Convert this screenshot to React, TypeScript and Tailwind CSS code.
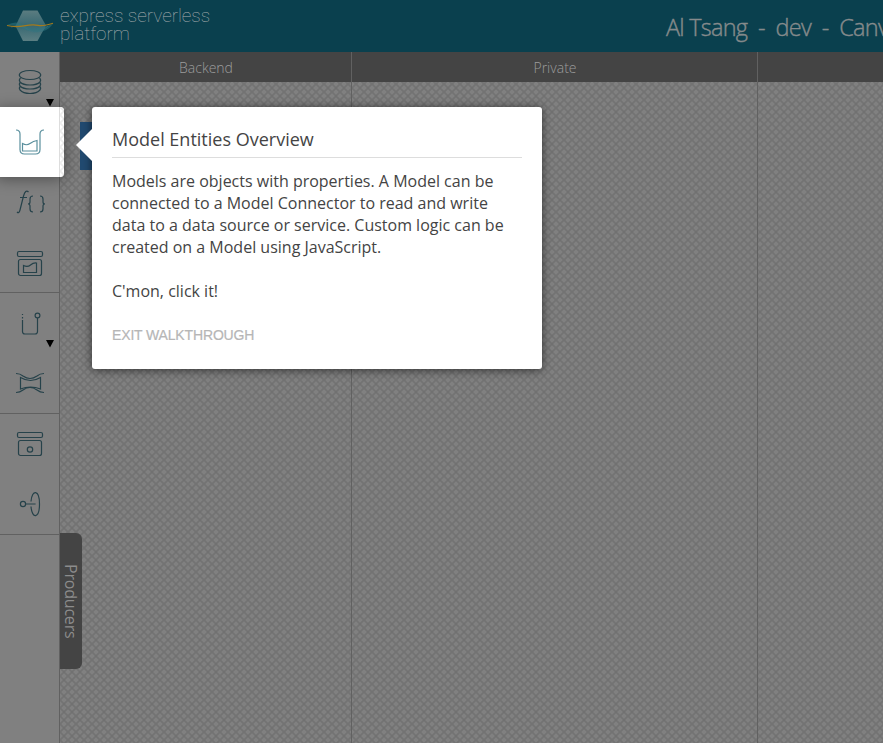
import React from "react";

const stroke = { fill: "none", stroke: "currentColor", strokeWidth: 1.2 };

function Tool({ children, className = "h-[60px]", arrow = false }: { children: React.ReactNode; className?: string; arrow?: boolean }) {
  return (
    <div className={`relative w-full shrink-0 text-[#26424a] ${className}`}>
      {children}
      {arrow && (
        <svg className="absolute bottom-0 left-[46px] h-2 w-2 text-black" viewBox="0 0 8 8">
          <path d="M0 0h8L4 7.5z" fill="currentColor" />
        </svg>
      )}
    </div>
  );
}

function Icon({ children, className = "" }: { children: React.ReactNode; className?: string }) {
  return (
    <svg className={`ml-[15px] block h-[30px] w-[30px] ${className}`} viewBox="0 0 30 30" {...stroke}>
      {children}
    </svg>
  );
}

function Pattern({ id, base, line, dot }: { id: string; base: string; line: string; dot: string }) {
  return (
    <svg className="absolute inset-0 h-full w-full">
      <defs>
        <pattern id={id} width="8" height="8" patternUnits="userSpaceOnUse">
          <rect width="8" height="8" fill={base} />
          <path d="M-1 -1L9 9M9 -1L-1 9" stroke={line} strokeWidth="1.800" />
          <rect x="3" y="3" width="2" height="2" fill={dot} />
        </pattern>
      </defs>
      <rect width="100%" height="100%" fill={`url(#${id})`} />
    </svg>
  );
}

function Logo() {
  return (
    <svg className="ml-1.5 mt-2 h-9 w-12 shrink-0" viewBox="0 0 48 36">
      <defs>
        <linearGradient id="hex" x1="0" y1="0" x2="0" y2="1">
          <stop offset="0" stopColor="#5b7c80" />
          <stop offset=".5" stopColor="#386973" />
          <stop offset="1" stopColor="#5b7e82" />
        </linearGradient>
      </defs>
      <path d="M17 2.500h14.500l8.500 15-8.500 15.500H17L9.500 18z" fill="url(#hex)" />
      <path d="M1 17q9-5 17 0t13 3q9-1 16-4-7 9-17 8-9-1-15-4T1 17" fill="#2d7480" opacity=".55" />
      <path d="M5 19q10-3 18 3t19-4" fill="none" stroke="#3d7580" opacity=".6" />
      <path d="M1 17.500q8 2 17 .3t14-.5 15-2" fill="none" stroke="#a47a1c" strokeWidth="1.200" />
    </svg>
  );
}

function Columns() {
  const cols = [
    { name: "Backend", width: "w-[292px]" },
    { name: "Private", width: "w-[406px]" },
    { name: "", width: "w-[126px]" },
  ];
  return (
    <main className="relative flex min-w-0 flex-1">
      <Pattern id="mesh" base="#808080" line="#737373" dot="#717171" />
      {cols.map((c, i) => (
        <section key={i} className={`relative shrink-0 ${c.width} ${i < 2 ? "border-r border-[#616161]" : ""}`}>
          <h2 className="h-[30px] bg-[#444] pl-px pt-px text-center text-[14px] font-light leading-[30px] text-[#9c9c9c]">{c.name}</h2>
        </section>
      ))}
      <div className="absolute left-5 top-[70px] h-12 w-12 bg-[#214a70]" />
      <div className="absolute left-0 top-[481px] flex h-[136px] w-[22px] items-center justify-center rounded-r-md bg-[#444] text-[16px] tracking-[-0.2px] text-[#8c8c8c] [writing-mode:vertical-rl]">
        Producers
      </div>
    </main>
  );
}

function Beaker() {
  return (
    <svg className="absolute left-[15px] top-5 h-[30px] w-[30px] text-[#5a8f9d]" viewBox="0 0 30 30" {...stroke}>
      <path d="M1 3q4 0 4 4v15.500q0 4.500 4.500 4.500h11q4.500 0 4.500-4.500V7q0-4 4-4" />
      <path d="M7.500 16.500q4 2.500 7.500 0t7-3V24h-14.500z" />
    </svg>
  );
}

export default function App() {
  return (
    <div className="relative flex h-[743px] w-[883px] flex-col overflow-hidden bg-[#808080] font-['Open_Sans',sans-serif]">
      <header className="flex h-[52px] shrink-0 bg-[#0a404e] text-[#858a8b]">
        <Logo />
        <div className="ml-1.5 w-[200px] shrink-0 whitespace-nowrap pt-[7px] font-['Roboto',sans-serif] text-[19px] font-thin leading-[18px] tracking-[-0.05px] text-[#a9adae]">
          express serverless
          <br />
          platform
        </div>
        <div className="ml-[406px] shrink-0 whitespace-pre text-[23.5px] font-light leading-[55px] tracking-[-0.75px] [-webkit-text-stroke:0.4px_#858a8b]">Al Tsang  -  dev  -  Canvas</div>
      </header>
      <div className="flex min-h-0 flex-1">
        <aside className="flex w-[60px] shrink-0 flex-col border-r border-[#616161]">
          <Tool className="h-[55px] pt-[15px]" arrow>
            <Icon>
              <ellipse cx="15" cy="8" rx="10.700" ry="4.500" />
              <path d="M5.500 11q-2 2-.5 4 3 3 10 3t10-3q1.500-2-.5-4M5.500 15q-2 2-.5 4 3 3 10 3t10-3q1.500-2-.5-4M5.500 19q-2 2-.5 4 3 3.500 10 3.500t10-3.500q1.500-2-.5-4" />
            </Icon>
          </Tool>
          <Tool className="h-[65px]"><span /></Tool>
          <Tool className="h-[60px] pt-[16px]">
            <Icon>
              <path d="M13.500 4q-3-3-5 4L5 22q-1 4-3 2M5 9.500h7M18 8q-3 0-3 3v3q0 2-2 2 2 0 2 2v3q0 3 3 3M25 8q3 0 3 3v3q0 2 2 2-2 0-2 2v3q0 3-3 3" />
            </Icon>
          </Tool>
          <Tool className="h-[61px] border-b border-[#616161] pt-[16px]">
            <Icon>
              <rect x="2.500" y="3.500" width="25" height="5" rx="1.500" />
              <rect x="3.500" y="11.500" width="23" height="16" rx="2" />
              <path d="M8.500 17.500q4 2 7-.5t6-2v9.500h-13z" />
            </Icon>
          </Tool>
          <Tool className="h-[55px] pt-[16px]" arrow>
            <Icon>
              <path d="M7.500 5v1M7.500 8v1.500M7.500 11v11.500q0 2.500 2.500 2.500h10q2.500 0 2.500-2.500V9" />
              <circle cx="22.500" cy="6.500" r="2.400" />
            </Icon>
          </Tool>
          <Tool className="h-[66px] border-b border-[#616161] pt-[20px]">
            <Icon>
              <path d="M1 5.500q4 0 7 2.500 7 5 14 0 3-2.500 7-2.500M1 24.500q4 0 7-2.500 7-5 14 0 3 2.500 7 2.500M5.500 9.500v11.500q10-4 20 0V9.500q-10 6-20 0z" />
            </Icon>
          </Tool>
          <Tool className="h-[60px] pt-[15px]">
            <Icon>
              <rect x="2.500" y="3.500" width="25" height="5" rx="1.500" />
              <rect x="3.500" y="11.500" width="23" height="15" rx="2" />
              <circle cx="15" cy="20.500" r="2.700" />
            </Icon>
          </Tool>
          <Tool className="h-[61px] border-b border-[#616161] pt-[15px]">
            <Icon>
              <circle cx="8" cy="15" r="2.600" />
              <path d="M10.600 15h10M16 12.500c1-12.500 8.500-12 8.500 2.500s-7.500 15.500-8.500 2.500" />
            </Icon>
          </Tool>
        </aside>
        <Columns />
      </div>

      <div className="absolute left-[-4px] top-[107px] h-[70px] w-[68px] overflow-hidden rounded bg-white shadow-[0_2px_15px_rgba(0,0,0,0.4)]">
        <div className="absolute bottom-0 right-0 top-0 w-[5px] border-l border-[#ddd]">
          <Pattern id="bright-mesh" base="#fff" line="#ececec" dot="#e0e0e0" />
        </div>
        <div className="absolute left-1 top-0"><Beaker /></div>
      </div>

      <div className="absolute left-[92px] top-[107px] h-[262px] w-[450px] rounded-[3px] bg-white px-5 pt-5 text-[#444] shadow-[0_1px_10px_rgba(0,0,0,0.6)]">
        <div className="absolute left-[-16px] top-[22px] h-8 w-4 bg-white [clip-path:polygon(0_50%,100%_0,100%_100%)]" />
        <h1 className="h-[31px] border-b border-[#ddd] text-[18px] leading-[25px]">Model Entities Overview</h1>
        <div className="pt-3 text-[16px] leading-[22px]">
          <p>Models are objects with properties. A Model can be</p>
          <p>connected to a Model Connector to read and write</p>
          <p>data to a data source or service. Custom logic can be</p>
          <p>created on a Model using JavaScript.</p>
          <p className="pt-[22px]">C'mon, click it!</p>
        </div>
        <button className="mt-[22px] block font-['Liberation_Sans',sans-serif] text-[14px] leading-[22px] tracking-[-0.15px] text-[#b6b6b6] [-webkit-text-stroke:0.2px_#b6b6b6]">EXIT WALKTHROUGH</button>
      </div>
    </div>
  );
}
